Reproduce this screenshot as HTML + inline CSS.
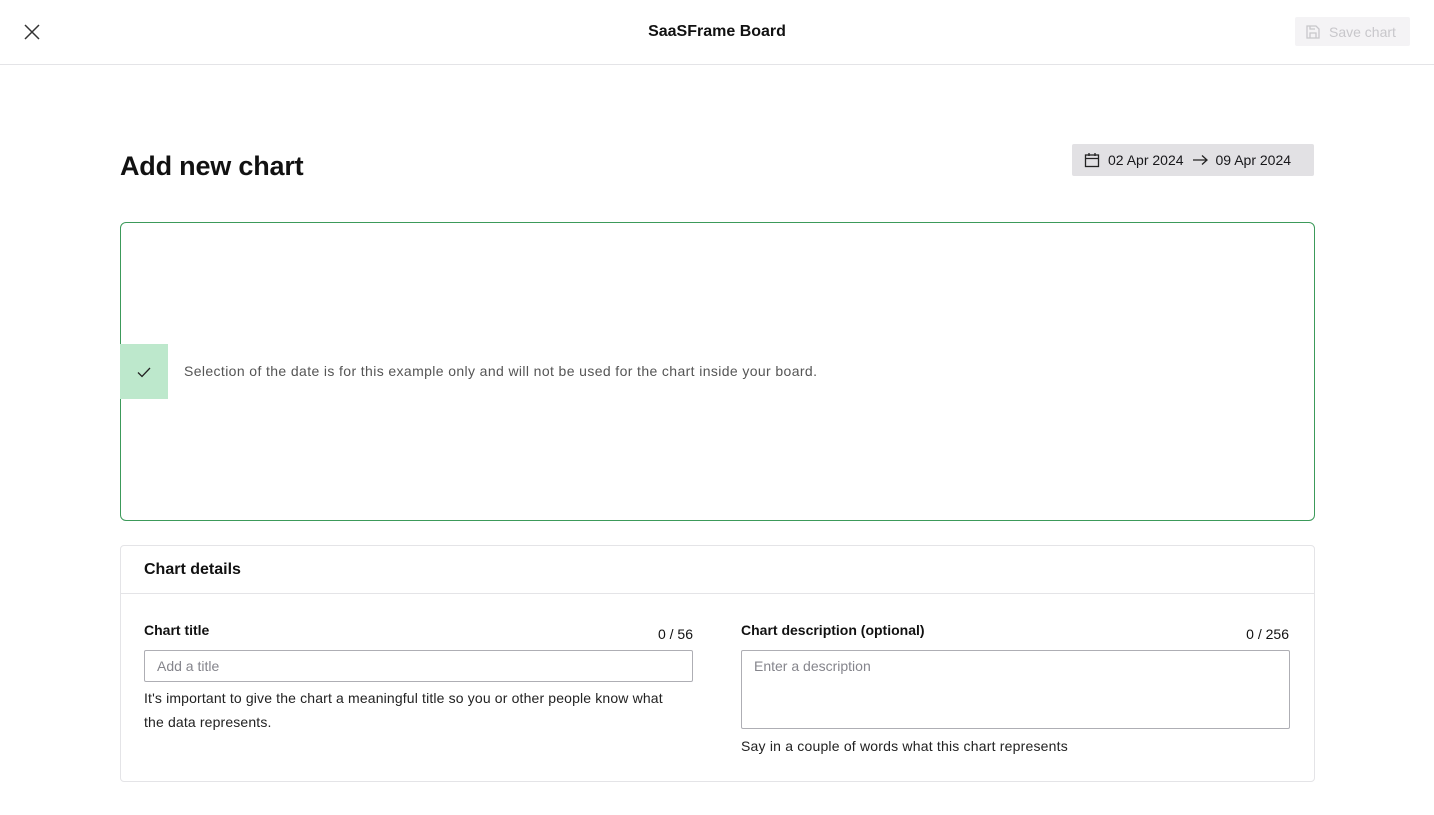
<!DOCTYPE html>
<html><head><style>
*{box-sizing:border-box;margin:0;padding:0}
body{width:1434px;height:815px;background:#fff;font-family:"Liberation Sans",sans-serif;color:#111;position:relative;overflow:hidden}
.abs{position:absolute}
.hdr{left:0;top:0;width:1434px;height:65px;border-bottom:1px solid #e4e4e7}
.save{left:1295px;top:17px;width:115px;height:29px;background:#f4f3f5;border-radius:2px;color:#c8c7cb;font-size:14px;display:flex;align-items:center;padding-left:10px;gap:8px}
.date{left:1072px;top:144px;width:242px;height:32px;background:#e2e1e4;border-radius:2px;font-size:14px;display:flex;align-items:center;padding-left:12px;gap:8px;color:#18181b}
.green{left:120px;top:222px;width:1195px;height:299px;border:1px solid #3c9a5a;border-radius:6px}
.chk{left:120px;top:344px;width:48px;height:55px;background:#bde8cc;display:flex;align-items:center;justify-content:center}
.card{left:120px;top:545px;width:1195px;height:237px;border:1px solid #e4e4e7;border-radius:4px}
.lbl{font-size:14px;font-weight:bold}
.inp{border:1px solid #aeaeb4;border-radius:2px;font-size:14px;color:#85858c;padding:7px 12px}
.sm{font-size:14px;color:#222;line-height:24px}
</style></head><body>
<div class="abs hdr"></div>
<svg class="abs" style="left:24px;top:24px" width="16" height="16" viewBox="0 0 16 16"><path d="M1 1L15 15M15 1L1 15" stroke="#333" stroke-width="1.5"/></svg>
<div class="abs" style="left:0;width:1434px;top:23px;text-align:center;font-size:16px;font-weight:bold">SaaSFrame Board</div>
<div class="abs save"><svg width="16" height="16" viewBox="0 0 16 16" fill="none" stroke="#c8c7cb" stroke-width="1.3"><path d="M2 2h9l3 3v9H2z M5 14v-5h6v5 M5 2v3h5"/></svg>Save chart</div>
<div class="abs" style="left:120px;top:151px;font-size:27px;font-weight:bold;letter-spacing:-0.2px">Add new chart</div>
<div class="abs date"><svg width="16" height="16" viewBox="0 0 16 16" fill="none" stroke="#222" stroke-width="1.3"><rect x="1.5" y="3" width="13" height="11.5"/><path d="M1.5 6.5h13M5 1v3M11 1v3"/></svg>02 Apr 2024 <svg width="16" height="12" viewBox="0 0 16 12" fill="none" stroke="#222" stroke-width="1.3"><path d="M1 6h14M10 1.5L15 6l-5 4.5"/></svg> 09 Apr 2024</div>
<div class="abs green"></div>
<div class="abs chk"><svg width="16" height="16" viewBox="0 0 16 16"><path d="M2 8.5l4 4L14 4" stroke="#222" stroke-width="1.3" fill="none"/></svg></div>
<div class="abs" style="left:184px;top:363px;font-size:14px;color:#555;letter-spacing:0.38px">Selection of the date is for this example only and will not be used for the chart inside your board.</div>
<div class="abs card"></div>
<div class="abs" style="left:120px;top:593px;width:1195px;border-top:1px solid #e4e4e7"></div>
<div class="abs" style="left:144px;top:561px;font-size:16px;font-weight:bold">Chart details</div>
<div class="abs lbl" style="left:144px;top:622px">Chart title</div>
<div class="abs" style="left:640px;top:626px;width:53px;text-align:right;font-size:14px">0 / 56</div>
<div class="abs inp" style="left:144px;top:650px;width:549px;height:32px">Add a title</div>
<div class="abs sm" style="left:144px;top:686px;width:540px;letter-spacing:0.15px">It's important to give the chart a meaningful title so you or other people know what the data represents.</div>
<div class="abs lbl" style="left:741px;top:622px">Chart description (optional)</div>
<div class="abs" style="left:1200px;top:626px;width:89px;text-align:right;font-size:14px">0 / 256</div>
<div class="abs inp" style="left:741px;top:650px;width:549px;height:79px">Enter a description</div>
<div class="abs sm" style="left:741px;top:734px;letter-spacing:0.2px">Say in a couple of words what this chart represents</div>
</body></html>
